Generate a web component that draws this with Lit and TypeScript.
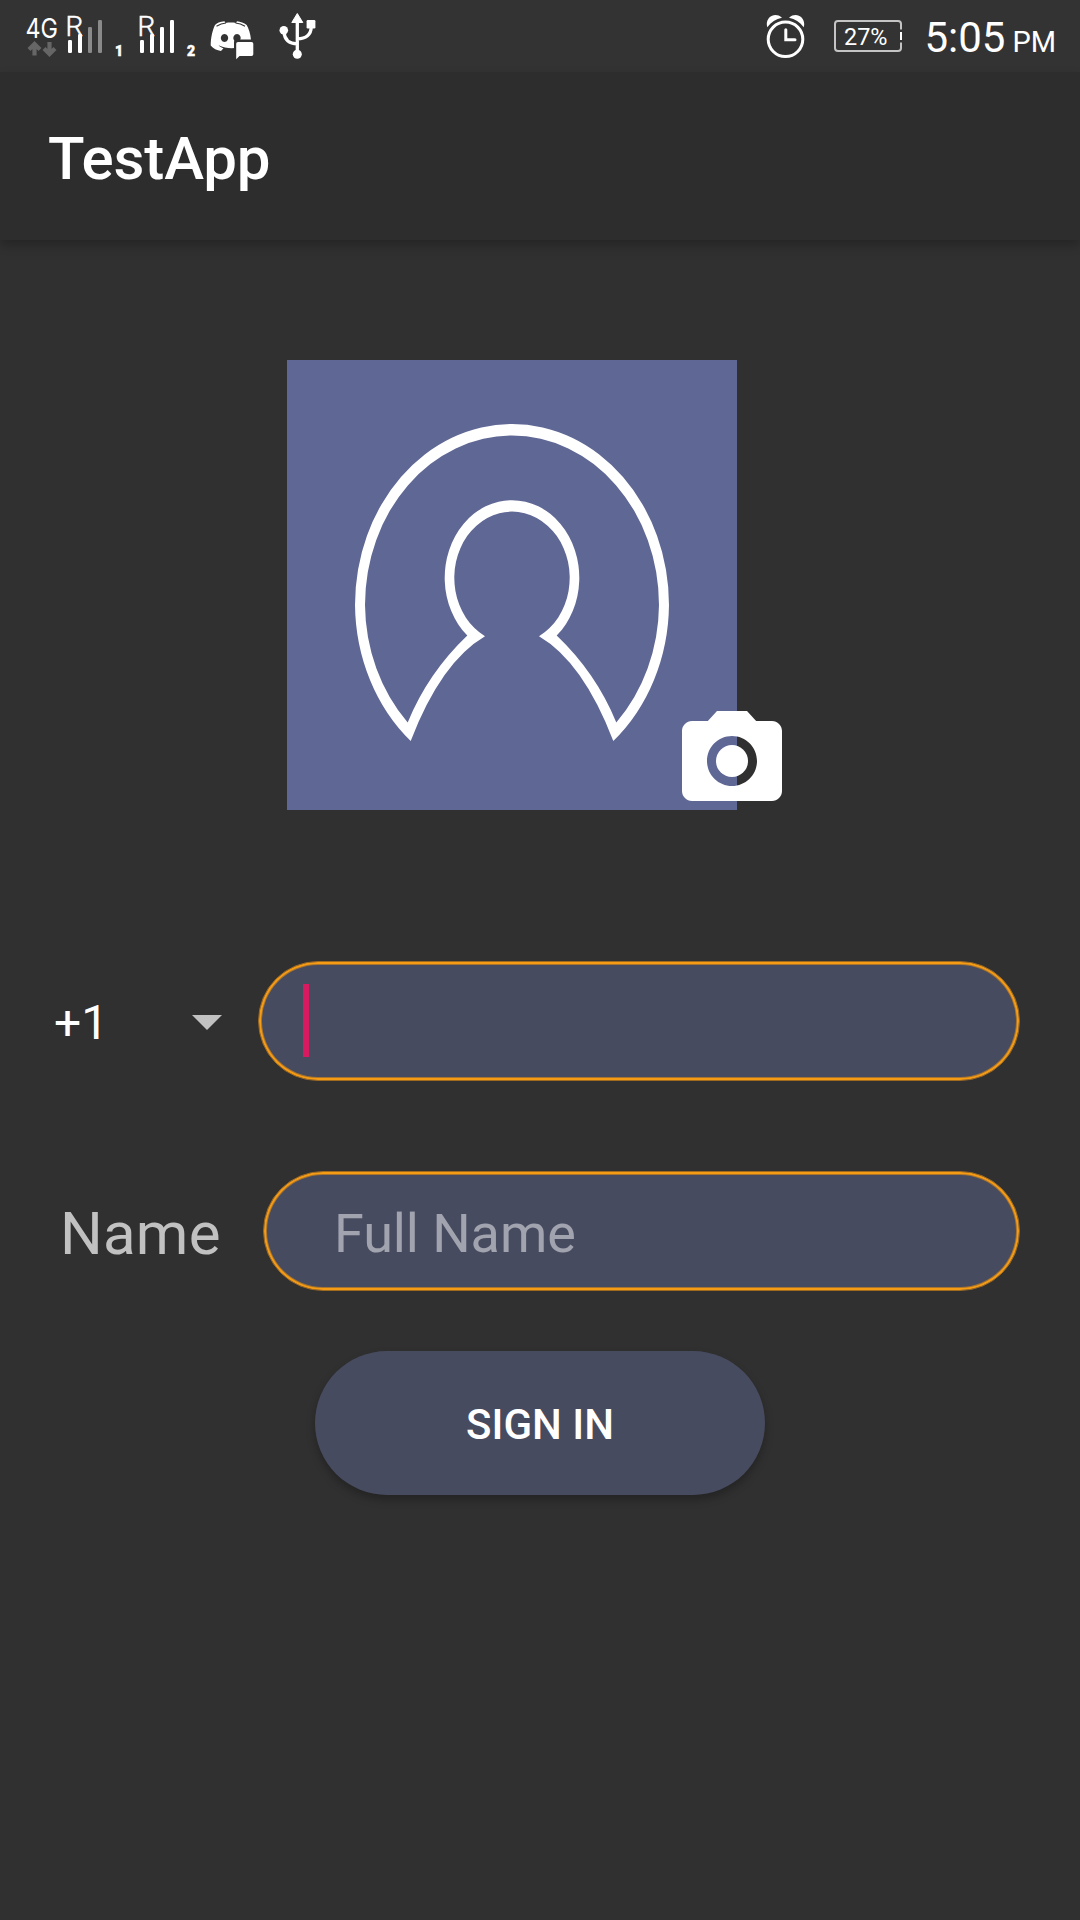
import { LitElement, html, css, svg } from "lit";
import { customElement, property } from "lit/decorators.js";

/** Roaming signal meter: an "R" sitting above the first two of four bars. */
@customElement("signal-meter")
class SignalMeter extends LitElement {
  @property({ type: Number }) level = 4;
  @property() sim = "1";

  static styles = css`
    :host { display: block; height: 72px; width: 66px; }
    svg { display: block; }
    .letter { font: 300 28px Roboto, sans-serif; fill: #fff; stroke: #fff; stroke-width: 0.5; }
    .sim { font: 900 14px Roboto, sans-serif; fill: #fff; stroke: #fff; stroke-width: 0.5; }
  `;

  render() {
    const tops = [40, 34, 27, 20];
    return html`<svg width="66" height="72" viewBox="-6 0 66 72">
      <text class="letter" x="-2.600" y="35.800" textLength="17.800" lengthAdjust="spacingAndGlyphs">R</text>
      ${tops.map(
        (y, i) => svg`<rect x=${i * 10} y=${y} width="4" height=${53 - y} rx="1.2"
          fill=${i < this.level ? "#fff" : "#8a8a8a"}></rect>`
      )}
      <text class="sim" x="47" y="55.500">${this.sim}</text>
    </svg>`;
  }
}

@customElement("status-bar")
class StatusBar extends LitElement {
  static styles = css`
    :host { display: flex; height: 72px; background: #333; color: #fff; font-family: Roboto, sans-serif; }
    svg { display: block; flex: none; }
    .left { display: flex; flex: 1; padding-left: 24px; }
    .network { width: 38px; }
    .second { margin-left: 6px; }
    .discord { margin-left: 9px; }
    .usb { margin-left: 22px; }
    .right { display: flex; align-items: flex-start; padding-right: 24px; }
    .gen { font: 400 27px Inter, sans-serif; fill: #fff; }
    .battery { margin-left: 27px; }
    .pct { font: 400 24px Roboto, sans-serif; fill: #fff; }
    .clock { display: flex; align-items: baseline; gap: 7px; margin-left: 21px; line-height: 75px; white-space: nowrap; }
    .time { font-size: 42px; }
    .half { font-size: 29px; }
  `;

  render() {
    return html`
      <div class="left">
        <svg class="network" width="38" height="72" viewBox="24 0 38 72">
          <text class="gen" x="25.500" y="37.700" textLength="32.500" lengthAdjust="spacingAndGlyphs">4G</text>
          <g fill="none" stroke="#666" stroke-width="4.200">
            <path d="M34.500 55.500V45M29 49.500l5.500-5.500l5.500 5.500" />
            <path d="M49.500 42V53M44 48.500l5.500 5.500l5.500-5.500" />
          </g>
        </svg>
        <signal-meter .level=${2} sim="1"></signal-meter>
        <signal-meter class="second" .level=${4} sim="2"></signal-meter>
        <svg class="discord" width="46" height="72" viewBox="209 0 46 72">
          <path fill="#fff" fill-rule="evenodd" d="M224.500 21.300C220 21.700 216.500 23.300 215 25C212.500 30 210.700 38 210.700 45.500C213 48.500 217 50.500 221 51L223.500 48.300C221.500 47.700 219.800 46.700 218.500 45.300C226 49 236 48.700 241.500 46.500L251 40C250.500 34 248.700 28.500 246.700 25C244 22.800 240.500 21.600 237 21.300L236 23C232.500 22.400 229 22.400 225.500 23Z
            M224.500 34a3.700 4 0 1 0 .01 0ZM237 34a3.700 4 0 1 0 .01 0Z" />
          <path d="M216.500 26.200Q221 23.500 226 23M235.500 23Q240.500 23.500 245 26.200" fill="none" stroke="#333" stroke-width="1.100" />
          <path d="M236.500 39.500H256V60H234V42Q234 39.500 236.500 39.500Z" fill="#333" />
          <path d="M238 42H251.500Q253.300 42 253.300 43.800V54.200Q253.300 56 251.500 56H239.500L236.200 59.300V43.800Q236.200 42 238 42Z" fill="#fff" />
        </svg>
        <svg class="usb" width="42" height="72" viewBox="277 0 42 72">
          <path d="M297.300 13.500L302.800 22.500H291.800Z" fill="#fff" stroke="#fff" stroke-linejoin="round" />
          <circle cx="283.800" cy="30.200" r="4.300" fill="#fff" />
          <circle cx="297.300" cy="54.300" r="4.500" fill="#fff" />
          <rect x="306.600" y="20" width="8.800" height="8.500" rx="1.200" fill="#fff" />
          <path d="M297.300 20V53M284 32C284.500 39.500 289 43.800 297.300 43.800M311.200 27C311.200 34.500 306 38.700 297.300 38.900" fill="none" stroke="#fff" stroke-width="3.300" />
        </svg>
      </div>
      <div class="right">
        <svg width="40" height="72" viewBox="766 0 40 72">
          <circle cx="785.500" cy="39.300" r="17.300" fill="none" stroke="#fff" stroke-width="3" />
          <path d="M785.800 29.800V39.800H795" fill="none" stroke="#fff" stroke-width="3" stroke-linecap="round" />
          <path d="M767.300 27.200C764.500 18.500 774 11 782 17.700C776 19 771 22 767.300 27.200ZM803.700 27.200C806.500 18.500 797 11 789 17.700C795 19 800 22 803.700 27.200Z" fill="#fff" />
        </svg>
        <svg class="battery" width="70" height="72" viewBox="833 0 70 72">
          <path d="M901 29.500V24Q901 21 898 21H838Q835 21 835 24V48Q835 51 838 51H898Q901 51 901 48V42.500" fill="none" stroke="#c4c4c4" stroke-width="2" />
          <path d="M901 32V40" stroke="#fff" stroke-width="2" />
          <text class="pct" x="844" y="45" textLength="43.500" lengthAdjust="spacingAndGlyphs">27%</text>
        </svg>
        <div class="clock"><span class="time">5:05</span><span class="half">PM</span></div>
      </div>
    `;
  }
}

@customElement("profile-picture")
class ProfilePicture extends LitElement {
  static styles = css`
    :host { display: block; position: relative; width: 450px; height: 450px; background: #5f6795; }
    svg { display: block; }
    .camera { position: absolute; left: 385px; top: 341px; }
  `;

  render() {
    return html`
      <svg width="450" height="450" viewBox="0 0 450 450">
        <path fill="#fff" fill-rule="evenodd" d="M123.700 381A157 181 0 0 1 68 245A157 181 0 0 1 382 245A157 181 0 0 1 326.300 381Q296 302 252 276.300A57.700 66.200 0 1 0 198 276.300Q154 302 123.700 381Z
          M120.700 362.500A147 169.500 0 0 1 78 245A147 169.500 0 0 1 372 245A147 169.500 0 0 1 329.300 362.500Q309 313 269.700 275.600A67.300 77.500 0 1 0 180.300 275.600Q141 313 120.700 362.500Z" />
      </svg>
      <svg class="camera" width="120" height="120" viewBox="0 0 24 24" fill="#fff">
        <circle cx="12" cy="12" r="3.200" />
        <path d="M9 2L7.170 4H4c-1.100 0-2 .9-2 2v12c0 1.100.9 2 2 2h16c1.100 0 2-.9 2-2V6c0-1.100-.9-2-2-2h-3.170L15 2H9zm3 15c-2.760 0-5-2.240-5-5s2.240-5 5-5 5 2.240 5 5-2.240 5-5 5z" />
      </svg>
    `;
  }
}

@customElement("app-root")
class AppRoot extends LitElement {
  static styles = css`
    :host { display: flex; flex-direction: column; width: 1080px; height: 1920px; overflow: hidden; background: #303030; color: #fff; font-family: Roboto, sans-serif; }
    .appbar { display: flex; align-items: center; box-sizing: border-box; height: 168px; padding: 4px 48px 0; background: #2d2d2d; box-shadow: 0 5px 10px rgba(0, 0, 0, 0.24); font-size: 60px; font-weight: 500; letter-spacing: -0.15px; }
    main { display: flex; flex-direction: column; }
    profile-picture { margin: 120px 0 0 287px; }
    .row { display: flex; align-items: stretch; height: 120px; padding-right: 60px; }
    .phone { margin-top: 151px; }
    .person { margin-top: 90px; }
    .code { display: flex; align-items: center; justify-content: space-between; box-sizing: border-box; width: 258px; padding: 3px 36px 0 54px; font-size: 48px; }
    .arrow { display: block; margin-top: -1px; }
    .label { display: flex; align-items: center; box-sizing: border-box; width: 263px; padding: 5px 0 0 60px; font-size: 60px; letter-spacing: 0.2px; color: #c1c1c1; }
    .field { display: flex; flex: 1; align-items: center; box-sizing: border-box; border: 1px solid #a06a1f; border-radius: 60px; background: #474b5f; box-shadow: inset 0 0 0 2px #f59b14, inset 0 0 0 3px #a8742e; }
    .caret { width: 6px; height: 73px; margin: 0 0 2px 44px; background: #d81b60; }
    .hint { padding: 5px 0 0 70px; font-size: 54px; letter-spacing: -0.1px; color: #a1a3ae; }
    .signin { display: flex; align-items: center; justify-content: center; box-sizing: border-box; width: 450px; height: 144px; margin: 60px 0 0 315px; padding: 3px 0 0; border: 0; border-radius: 72px; background: #474b5f; color: #fff; font: 500 42px Roboto, sans-serif; box-shadow: 0 5px 8px rgba(0, 0, 0, 0.26); }
  `;

  render() {
    return html`
      <status-bar></status-bar>
      <header class="appbar">TestApp</header>
      <main>
        <profile-picture></profile-picture>
        <div class="row phone">
          <div class="code">
            <span>+1</span>
            <svg class="arrow" width="30" height="15" viewBox="0 0 30 15"><path d="M0 0H30L15 15Z" fill="#c1c1c1" /></svg>
          </div>
          <div class="field"><span class="caret"></span></div>
        </div>
        <div class="row person">
          <div class="label">Name</div>
          <div class="field"><span class="hint">Full Name</span></div>
        </div>
        <button class="signin">SIGN IN</button>
      </main>
    `;
  }
}
